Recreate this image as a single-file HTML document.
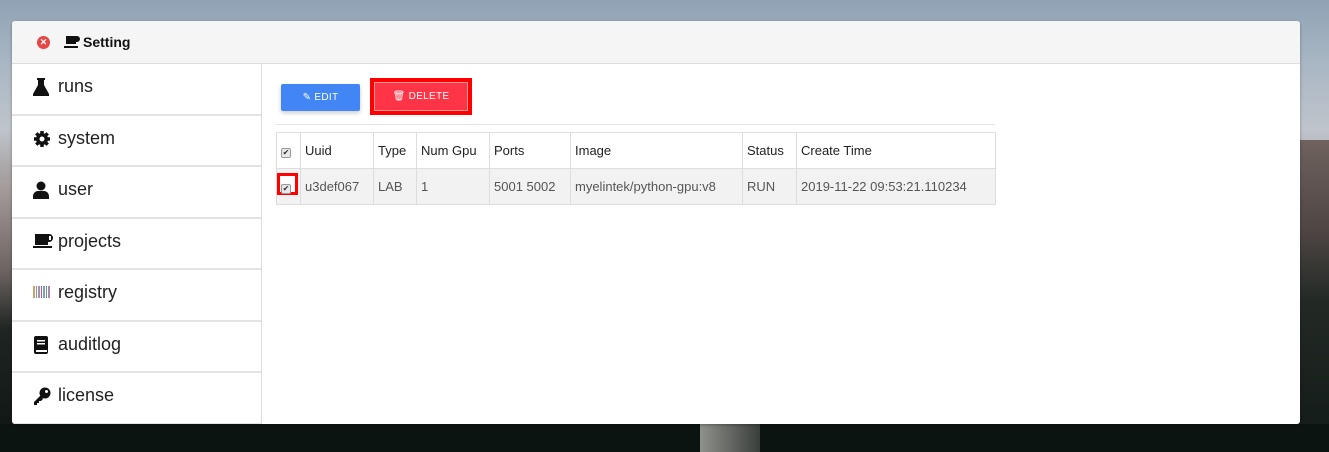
<!DOCTYPE html>
<html><head><meta charset="utf-8"><style>
*{box-sizing:border-box;margin:0;padding:0}
body{width:1329px;height:452px;overflow:hidden;position:relative;font-family:"Liberation Sans",sans-serif;
background:linear-gradient(180deg,#8fa2b4 0px,#a8b6c3 60px,#bfc4cb 130px,#9a8f8d 200px,#4a4644 300px,#1c2421 380px,#0f1715 452px);}
.lt{position:absolute;left:0;top:180px;width:12px;height:272px;background:linear-gradient(180deg,#a9a0a0,#6e6462 90px,#1e2522 150px,#0e1412)}
.rt{position:absolute;right:0;top:140px;width:29px;height:312px;background:linear-gradient(180deg,#6f625f,#4f4644 90px,#232a26 160px,#121a17)}
.bot{position:absolute;left:0;top:424px;width:1329px;height:28px;background:#0c1412}
.bot2{position:absolute;left:700px;top:424px;width:60px;height:28px;background:linear-gradient(90deg,#8f918c,#3a3e3a)}
.card{position:absolute;left:12px;top:21px;width:1288px;height:403px;background:#fff;border-radius:3px;overflow:hidden;box-shadow:0 1px 3px rgba(0,0,0,.3)}
.hdr{height:43px;background:#f5f5f5;border-bottom:1px solid #ddd;display:flex;align-items:center;font-weight:bold;font-size:14px;color:#111}
.side{position:absolute;left:0;top:43px;width:250px;}
.item{height:51.5px;border-bottom:2px solid #e3e3e3;border-right:1px solid #ddd;display:flex;align-items:flex-start;padding:12px 0 0 21px;font-size:18px;color:#222}
.ic{width:25px;display:inline-flex;justify-content:flex-start;margin-top:2px}
.main{position:absolute;left:249px;top:43px;right:0;bottom:0;border-left:1px solid #ddd}
.btn{position:absolute;top:20px;height:27px;color:#fff;font-size:10px;display:flex;align-items:center;justify-content:center;letter-spacing:.3px}
table{position:absolute;left:14px;top:68px;border-collapse:collapse;font-size:13px;color:#222}
td{border:1px solid #ddd;height:36px;padding:0 4px}
tr.r td{background:#f2f2f2;color:#555}
.cb{display:inline-block;width:10px;height:10px;border:1px solid #999;background:#e8e8e8;border-radius:2px;font-size:8px;line-height:8px;text-align:center;color:#333}
</style></head><body>
<div class="lt"></div><div class="rt"></div><div class="bot"></div><div class="bot2"></div>
<div class="card">
 <div class="hdr">
  <span style="margin-left:25px;width:13px;height:13px;border-radius:50%;background:#e84545;color:#fff;font-size:9px;display:inline-flex;align-items:center;justify-content:center">✕</span>
  <svg width="16" height="12" viewBox="0 0 16 12" style="margin-left:14px;margin-right:3px"><path d="M2 0h11a3 3 0 0 1 0 6h-1v2H2z" fill="#111"/><rect x="0" y="10" width="14" height="2" fill="#111"/></svg>Setting
 </div>
 <div class="side">
  <div class="item"><span class="ic"><svg width="16" height="18" viewBox="0 0 16 18"><path d="M4 0h8v2h-1v5l5 9v2H0v-2l5-9V2H4z" fill="#111"/></svg></span>runs</div>
  <div class="item"><span class="ic"><svg width="18" height="18" viewBox="0 0 18 18"><circle cx="9" cy="9" r="6" fill="#111"/><g stroke="#111" stroke-width="3.5"><path d="M9 1v16M1 9h16M3.3 3.3l11.4 11.4M14.7 3.3L3.3 14.7"/></g><circle cx="9" cy="9" r="2.5" fill="#fff"/></svg></span>system</div>
  <div class="item"><span class="ic"><svg width="16" height="18" viewBox="0 0 16 18"><circle cx="8" cy="5" r="4.5" fill="#111"/><path d="M0 18v-3a5 5 0 0 1 5-5h6a5 5 0 0 1 5 5v3z" fill="#111"/></svg></span>user</div>
  <div class="item"><span class="ic"><svg width="21" height="16" viewBox="0 0 21 16"><path d="M2 1h14a4 4 0 0 1 0 8h-1v3H2z" fill="#111"/><rect x="0" y="13" width="19" height="2" fill="#111"/><rect x="16" y="3" width="2" height="4" fill="#fff"/></svg></span>projects</div>
  <div class="item"><span class="ic"><svg width="18" height="16" viewBox="0 0 18 16"><rect x="0" y="2" width="2" height="12" fill="#c9a36a"/><rect x="3" y="2" width="1" height="12" fill="#8a8adb"/><rect x="5" y="2" width="2" height="12" fill="#999"/><rect x="8" y="2" width="1" height="12" fill="#d48"/><rect x="10" y="2" width="2" height="12" fill="#6ab"/><rect x="13" y="2" width="1" height="12" fill="#888"/><rect x="15" y="2" width="2" height="12" fill="#a8a"/></svg></span>registry</div>
  <div class="item"><span class="ic"><svg width="16" height="18" viewBox="0 0 16 18"><rect x="1" y="0" width="14" height="18" rx="2" fill="#111"/><rect x="4" y="4" width="8" height="1.5" fill="#fff"/><rect x="4" y="7" width="8" height="1.5" fill="#fff"/><rect x="3" y="14" width="11" height="2" fill="#fff"/></svg></span>auditlog</div>
  <div class="item"><span class="ic"><svg width="18" height="18" viewBox="0 0 18 18"><circle cx="12" cy="6" r="5.5" fill="#111"/><path d="M8 8L1 15v3h3v-2h2v-2h2l2-2z" fill="#111"/><circle cx="13.5" cy="4.5" r="1.5" fill="#fff"/></svg></span>license</div>
 </div>
 <div class="main">
  <div class="btn" style="left:19px;width:79px;background:#4285f4;border-radius:2px;box-shadow:0 2px 4px rgba(0,0,0,.2)">✎&nbsp;EDIT</div>
  <div style="position:absolute;left:108px;top:14px;width:102px;height:37px;background:#f00"></div>
  <div class="btn" style="left:112px;top:18px;width:94px;height:29px;background:#ff3547;border:1px solid #f99">🗑&nbsp;DELETE</div>
  <div style="position:absolute;left:14px;top:60px;width:719px;height:1px;background:#e5e5e5"></div>
  <table>
   <tr><td style="width:24px"><span class="cb">✔</span></td><td style="width:73px">Uuid</td><td style="width:43px">Type</td><td style="width:73px">Num Gpu</td><td style="width:81px">Ports</td><td style="width:172px">Image</td><td style="width:54px">Status</td><td style="width:199px">Create Time</td></tr>
   <tr class="r"><td style="position:relative"><div style="position:absolute;left:0px;top:4px;width:21px;height:22px;border:3px solid #f00;background:#fff"></div><span class="cb" style="position:relative">✔</span></td><td>u3def067</td><td>LAB</td><td>1</td><td>5001 5002</td><td>myelintek/python-gpu:v8</td><td>RUN</td><td>2019-11-22 09:53:21.110234</td></tr>
  </table>
 </div>
</div>
</body></html>
